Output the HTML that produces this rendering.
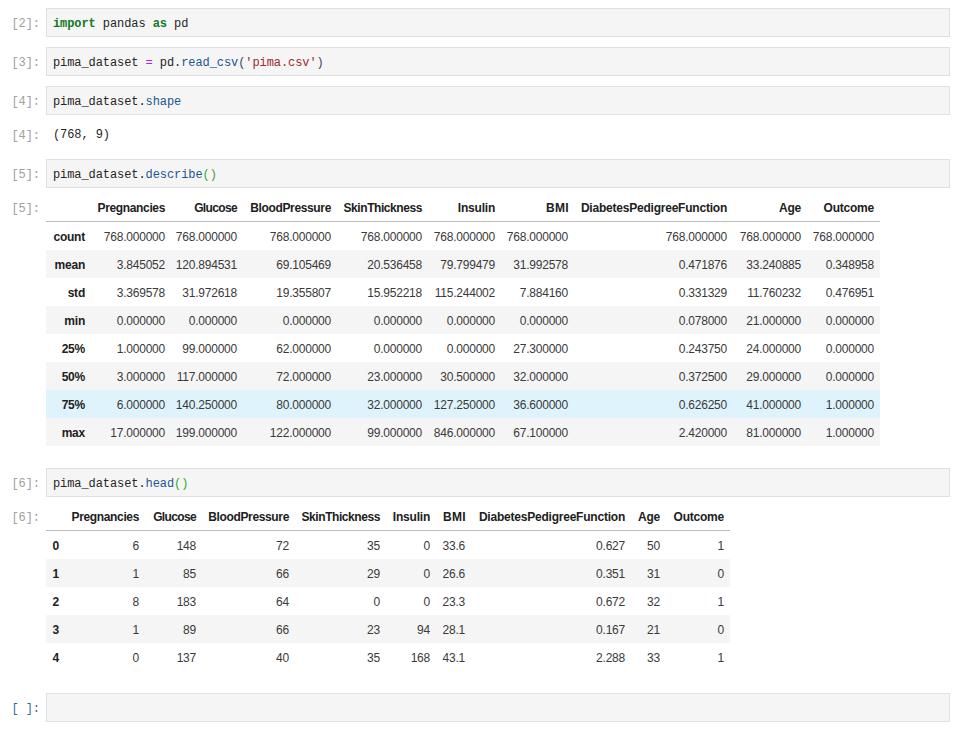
<!DOCTYPE html>
<html><head><meta charset="utf-8">
<style>
html,body{margin:0;padding:0;background:#fff;width:961px;height:740px;overflow:hidden;position:relative}
.p{position:absolute;left:0;width:40px;text-align:right;font-family:"Liberation Mono",monospace;font-size:12px;letter-spacing:-0.08px;color:#a0a0a0;white-space:pre;line-height:14px}
.p.act{color:#336a9e}
.box{position:absolute;left:46px;width:902px;height:27px;border:1px solid #e0e0e0;background:#f5f5f5}
.code{position:absolute;left:53px;font-family:"Liberation Mono",monospace;font-size:12px;letter-spacing:-0.08px;color:#262626;white-space:pre;line-height:14px}
.kw{color:#127a22;font-weight:bold}
.op{color:#aa22ff}
.pr{color:#1c5592}
.st{color:#a02832}
.br{color:#3b4a5a}
.mb{color:#33aa33}
table{position:absolute;left:46px;border-collapse:collapse;border-spacing:0;table-layout:fixed;font-family:"Liberation Sans",sans-serif;font-size:12px;letter-spacing:-0.22px;color:#212121}
thead tr{border-bottom:1px solid #bdbdbd}
th,td{padding:8px 6px 0 0;height:20px;line-height:14px;vertical-align:top;text-align:right;white-space:nowrap;overflow:visible}
th{font-weight:bold}
td{color:#3a3a3a}
tbody tr.g{background:#f5f5f5}
tbody tr.h{background:#dff3fd}
</style></head><body>

<div class="p" style="top:17px">[2]:</div>
<div class="box" style="top:8px"></div>
<div class="code" style="top:17px"><span class="kw">import</span> pandas <span class="kw">as</span> pd</div>

<div class="p" style="top:56px">[3]:</div>
<div class="box" style="top:47px"></div>
<div class="code" style="top:56px">pima_dataset <span class="op">=</span> pd.<span class="pr">read_csv</span><span class="br">(</span><span class="st">'pima.csv'</span><span class="br">)</span></div>

<div class="p" style="top:95px">[4]:</div>
<div class="box" style="top:86px"></div>
<div class="code" style="top:95px">pima_dataset.<span class="pr">shape</span></div>

<div class="p" style="top:129px">[4]:</div>
<div class="code" style="top:128px">(768, 9)</div>

<div class="p" style="top:168px">[5]:</div>
<div class="box" style="top:159px"></div>
<div class="code" style="top:168px">pima_dataset.<span class="pr">describe</span><span class="mb">()</span></div>

<div class="p" style="top:202px">[5]:</div>
<table style="top:193px;width:834px">
<colgroup><col style="width:45px"><col style="width:80px"><col style="width:72px"><col style="width:94px"><col style="width:91px"><col style="width:73px"><col style="width:73px"><col style="width:159px"><col style="width:74px"><col style="width:73px"></colgroup>
<thead><tr><th></th><th style="letter-spacing:-0.36px">Pregnancies</th><th style="letter-spacing:-0.65px">Glucose</th><th style="letter-spacing:-0.35px">BloodPressure</th><th style="letter-spacing:-0.43px">SkinThickness</th><th>Insulin</th><th style="letter-spacing:0.36px;padding-right:5px">BMI</th><th>DiabetesPedigreeFunction</th><th>Age</th><th>Outcome</th></tr></thead>
<tbody>
<tr><th>count</th><td>768.000000</td><td>768.000000</td><td>768.000000</td><td>768.000000</td><td>768.000000</td><td>768.000000</td><td>768.000000</td><td>768.000000</td><td>768.000000</td></tr>
<tr class="g"><th>mean</th><td>3.845052</td><td>120.894531</td><td>69.105469</td><td>20.536458</td><td>79.799479</td><td>31.992578</td><td>0.471876</td><td>33.240885</td><td>0.348958</td></tr>
<tr><th>std</th><td>3.369578</td><td>31.972618</td><td>19.355807</td><td>15.952218</td><td>115.244002</td><td>7.884160</td><td>0.331329</td><td>11.760232</td><td>0.476951</td></tr>
<tr class="g"><th>min</th><td>0.000000</td><td>0.000000</td><td>0.000000</td><td>0.000000</td><td>0.000000</td><td>0.000000</td><td>0.078000</td><td>21.000000</td><td>0.000000</td></tr>
<tr><th>25%</th><td>1.000000</td><td>99.000000</td><td>62.000000</td><td>0.000000</td><td>0.000000</td><td>27.300000</td><td>0.243750</td><td>24.000000</td><td>0.000000</td></tr>
<tr class="g"><th>50%</th><td>3.000000</td><td>117.000000</td><td>72.000000</td><td>23.000000</td><td>30.500000</td><td>32.000000</td><td>0.372500</td><td>29.000000</td><td>0.000000</td></tr>
<tr class="h"><th>75%</th><td>6.000000</td><td>140.250000</td><td>80.000000</td><td>32.000000</td><td>127.250000</td><td>36.600000</td><td>0.626250</td><td>41.000000</td><td>1.000000</td></tr>
<tr class="g"><th>max</th><td>17.000000</td><td>199.000000</td><td>122.000000</td><td>99.000000</td><td>846.000000</td><td>67.100000</td><td>2.420000</td><td>81.000000</td><td>1.000000</td></tr>
</tbody></table>

<div class="p" style="top:477px">[6]:</div>
<div class="box" style="top:468px"></div>
<div class="code" style="top:477px">pima_dataset.<span class="pr">head</span><span class="mb">()</span></div>

<div class="p" style="top:511px">[6]:</div>
<table style="top:502px;width:684px">
<colgroup><col style="width:19px"><col style="width:80px"><col style="width:57px"><col style="width:93px"><col style="width:91px"><col style="width:50px"><col style="width:35px"><col style="width:160px"><col style="width:35px"><col style="width:64px"></colgroup>
<thead><tr><th></th><th style="letter-spacing:-0.36px">Pregnancies</th><th style="letter-spacing:-0.65px">Glucose</th><th style="letter-spacing:-0.35px">BloodPressure</th><th style="letter-spacing:-0.43px">SkinThickness</th><th>Insulin</th><th style="letter-spacing:0.36px;padding-right:5px">BMI</th><th>DiabetesPedigreeFunction</th><th>Age</th><th>Outcome</th></tr></thead>
<tbody>
<tr><th>0</th><td>6</td><td>148</td><td>72</td><td>35</td><td>0</td><td>33.6</td><td>0.627</td><td>50</td><td>1</td></tr>
<tr class="g"><th>1</th><td>1</td><td>85</td><td>66</td><td>29</td><td>0</td><td>26.6</td><td>0.351</td><td>31</td><td>0</td></tr>
<tr><th>2</th><td>8</td><td>183</td><td>64</td><td>0</td><td>0</td><td>23.3</td><td>0.672</td><td>32</td><td>1</td></tr>
<tr class="g"><th>3</th><td>1</td><td>89</td><td>66</td><td>23</td><td>94</td><td>28.1</td><td>0.167</td><td>21</td><td>0</td></tr>
<tr><th>4</th><td>0</td><td>137</td><td>40</td><td>35</td><td>168</td><td>43.1</td><td>2.288</td><td>33</td><td>1</td></tr>
</tbody></table>

<div class="p act" style="top:702px">[ ]:</div>
<div class="box" style="top:693px"></div>

</body></html>
